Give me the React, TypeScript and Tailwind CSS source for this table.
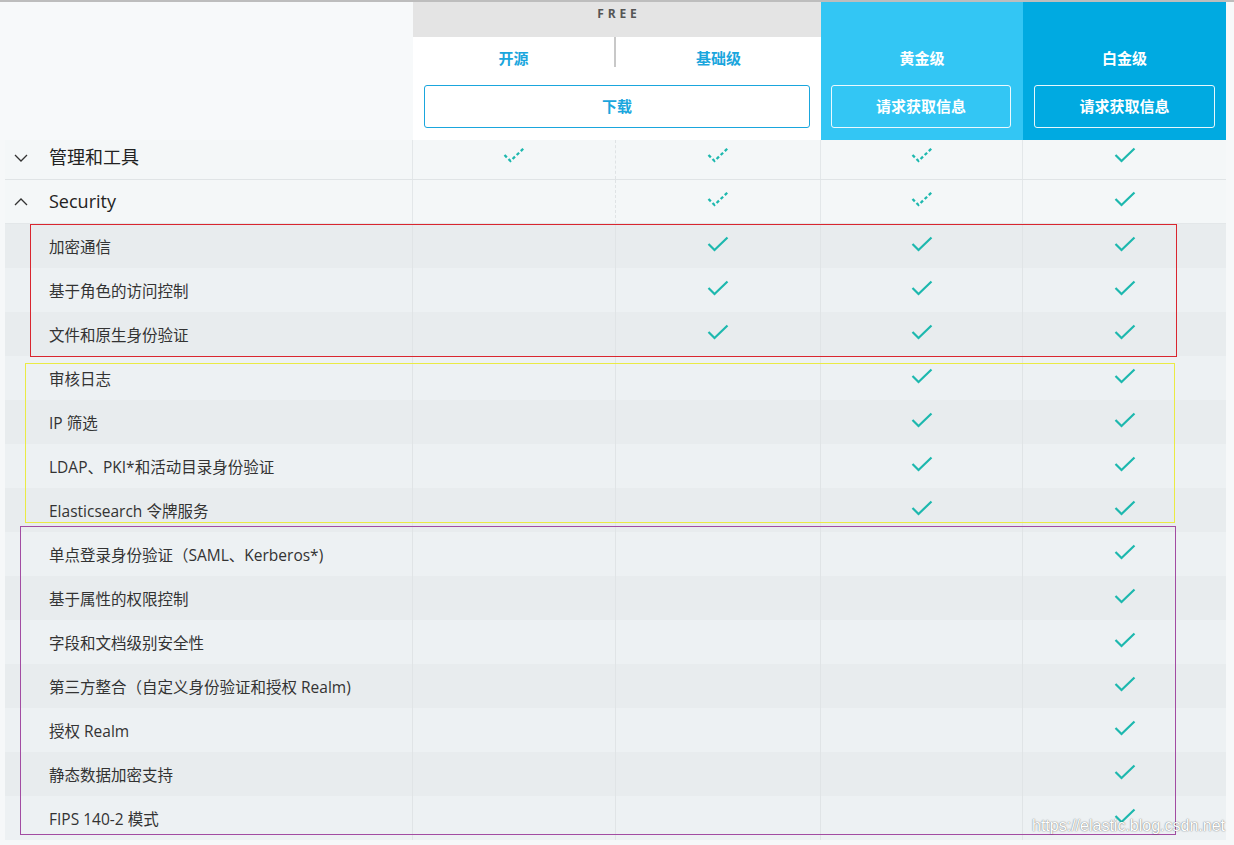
import React from "react";

type Mark = 0 | 1 | 2; // 0 none, 1 solid, 2 dashed

const Check = ({ kind }: { kind: Mark }) => {
  if (kind === 0) return null;
  return (
    <svg width="22" height="16" viewBox="0 0 22 16" className="block">
      <polyline
        points="1.5,8 7.5,14 20.5,1.5"
        fill="none"
        stroke="#1db8ae"
        strokeWidth={kind === 2 ? 2.3 : 2.2}
        strokeLinecap="butt"
        strokeLinejoin="miter"
        strokeDasharray={kind === 2 ? "3.3 2.4" : undefined}
      />
    </svg>
  );
};

const ChevronDown = () => (
  <svg width="14" height="8" viewBox="0 0 14 8" className="block">
    <polyline points="1,1 7,7 13,1" fill="none" stroke="#333" strokeWidth="1.3" />
  </svg>
);
const ChevronUp = () => (
  <svg width="14" height="8" viewBox="0 0 14 8" className="block">
    <polyline points="1,7 7,1 13,7" fill="none" stroke="#333" strokeWidth="1.3" />
  </svg>
);

const subRows: { label: string; marks: Mark[] }[] = [
  { label: "加密通信", marks: [0, 1, 1, 1] },
  { label: "基于角色的访问控制", marks: [0, 1, 1, 1] },
  { label: "文件和原生身份验证", marks: [0, 1, 1, 1] },
  { label: "审核日志", marks: [0, 0, 1, 1] },
  { label: "IP 筛选", marks: [0, 0, 1, 1] },
  { label: "LDAP、PKI*和活动目录身份验证", marks: [0, 0, 1, 1] },
  { label: "Elasticsearch 令牌服务", marks: [0, 0, 1, 1] },
  { label: "单点登录身份验证（SAML、Kerberos*)", marks: [0, 0, 0, 1] },
  { label: "基于属性的权限控制", marks: [0, 0, 0, 1] },
  { label: "字段和文档级别安全性", marks: [0, 0, 0, 1] },
  { label: "第三方整合（自定义身份验证和授权 Realm)", marks: [0, 0, 0, 1] },
  { label: "授权 Realm", marks: [0, 0, 0, 1] },
  { label: "静态数据加密支持", marks: [0, 0, 0, 1] },
  { label: "FIPS 140-2 模式", marks: [0, 0, 0, 1] },
];

const colW = ["w-[203px]", "w-[205px]", "w-[202px]", "w-[203px]"];

export default function App() {
  return (
    <div className="relative w-[1234px] h-[845px] overflow-hidden bg-[#f6f8f9] font-['Open_Sans','Noto_Sans_CJK_SC',sans-serif]">
      <div className="h-[2px] bg-[#bdbdbd]" />
      {/* header */}
      <div className="flex h-[138px]">
        <div className="w-[413px] bg-[#f7f9fa]" />
        <div className="w-[408px] flex flex-col">
          <div className="h-[35px] bg-[#e4e4e4] flex justify-center pt-[5px]">
            <span className="text-[12px] leading-[14px] font-bold tracking-[0.32em] text-[#555] pl-[4px]">FREE</span>
          </div>
          <div className="flex-1 bg-white flex flex-col">
            <div className="flex h-[30px]">
              <div className="w-[203px] border-r-2 border-[#c8c8c8] flex justify-center pt-[11px]">
                <span className="text-[15px] leading-[20px] font-bold text-[#1aa6dd]">开源</span>
              </div>
              <div className="flex-1 flex justify-center pt-[11px]">
                <span className="text-[15px] leading-[20px] font-bold text-[#1aa6dd]">基础级</span>
              </div>
            </div>
            <div className="mt-[18px] mx-[11px] h-[43px] border border-[#1aa6dd] rounded-[3px] flex items-center justify-center">
              <span className="text-[15px] font-bold text-[#1aa6dd]">下载</span>
            </div>
          </div>
        </div>
        <div className="w-[202px] bg-[#33c6f4] flex flex-col pt-[46px]">
          <div className="h-[20px] flex justify-center">
            <span className="text-[15px] leading-[20px] font-bold text-white">黄金级</span>
          </div>
          <div className="mt-[17px] ml-[10px] mr-[12px] h-[43px] border border-white/90 rounded-[3px] flex items-center justify-center">
            <span className="text-[15px] font-bold text-white">请求获取信息</span>
          </div>
        </div>
        <div className="w-[203px] bg-[#00aae1] flex flex-col pt-[46px]">
          <div className="h-[20px] flex justify-center">
            <span className="text-[15px] leading-[20px] font-bold text-white">白金级</span>
          </div>
          <div className="mt-[17px] ml-[11px] mr-[11px] h-[43px] border border-white/90 rounded-[3px] flex items-center justify-center">
            <span className="text-[15px] font-bold text-white">请求获取信息</span>
          </div>
        </div>
        <div className="flex-1 bg-[#f7f9fa]" />
      </div>

      {/* body */}
      <div className="pl-[5px] w-[1226px]">
        {/* 管理和工具 */}
        <div className="flex h-[40px] bg-[#f4f7f8] border-b border-[#e0e4e6]">
          <div className="w-[408px] flex items-center pb-[4px] border-r border-[#e3e7e9]">
            <div className="w-[44px] pl-[9px] pt-[1px]"><ChevronDown /></div>
            <span className="text-[18px] text-[#222]">管理和工具</span>
          </div>
          {([2, 2, 2, 1] as Mark[]).map((m, i) => (
            <div
              key={i}
              className={`${colW[i]} flex justify-center pt-[7px] ${i === 0 ? "border-r border-dashed border-[#dfe3e5]" : i < 3 ? "border-r border-[#e3e7e9]" : ""}`}
            >
              <Check kind={m} />
            </div>
          ))}
        </div>
        {/* Security */}
        <div className="flex h-[44px] bg-[#f4f7f8] border-b border-[#e3e7e9]">
          <div className="w-[408px] flex items-center border-r border-[#e3e7e9]">
            <div className="w-[44px] pl-[9px] pt-[1px]"><ChevronUp /></div>
            <span className="text-[18px] text-[#222]">Security</span>
          </div>
          {([0, 2, 2, 1] as Mark[]).map((m, i) => (
            <div
              key={i}
              className={`${colW[i]} flex justify-center pt-[11px] ${i === 0 ? "border-r border-dashed border-[#dfe3e5]" : i < 3 ? "border-r border-[#e3e7e9]" : ""}`}
            >
              <Check kind={m} />
            </div>
          ))}
        </div>
        {subRows.map((r, idx) => (
          <div
            key={idx}
            className={`flex h-[44px] ${idx % 2 === 0 ? "bg-[#e8ecee]" : "bg-[#edf1f3]"}`}
          >
            <div className="w-[408px] flex items-center pl-[44px] pt-[3px] border-r border-[#e0e4e6]">
              <span className="text-[15.5px] text-[#333]">{r.label}</span>
            </div>
            {r.marks.map((m, i) => (
              <div
                key={i}
                className={`${colW[i]} flex justify-center pt-[12px] ${i < 3 ? "border-r border-[#e0e4e6]" : ""}`}
              >
                <Check kind={m} />
              </div>
            ))}
          </div>
        ))}
      </div>

      {/* annotation boxes */}
      <div className="absolute left-[30px] top-[224px] w-[1147px] h-[133px] border border-[#d9262f] pointer-events-none" />
      <div className="absolute left-[25px] top-[363px] w-[1150px] h-[160px] border border-[#eaeb44] pointer-events-none" />
      <div className="absolute left-[20px] top-[526px] w-[1156px] h-[309px] border border-[#a24ca2] pointer-events-none" />

      {/* watermark */}
      <div className="absolute left-[1032px] top-[816px] text-[16px] leading-[20px] text-white font-['Liberation_Sans',sans-serif] [text-shadow:0_0_1px_rgba(0,0,0,0.5),0_0_2px_rgba(0,0,0,0.25)]">
        https://elastic.blog.csdn.net
      </div>
    </div>
  );
}
